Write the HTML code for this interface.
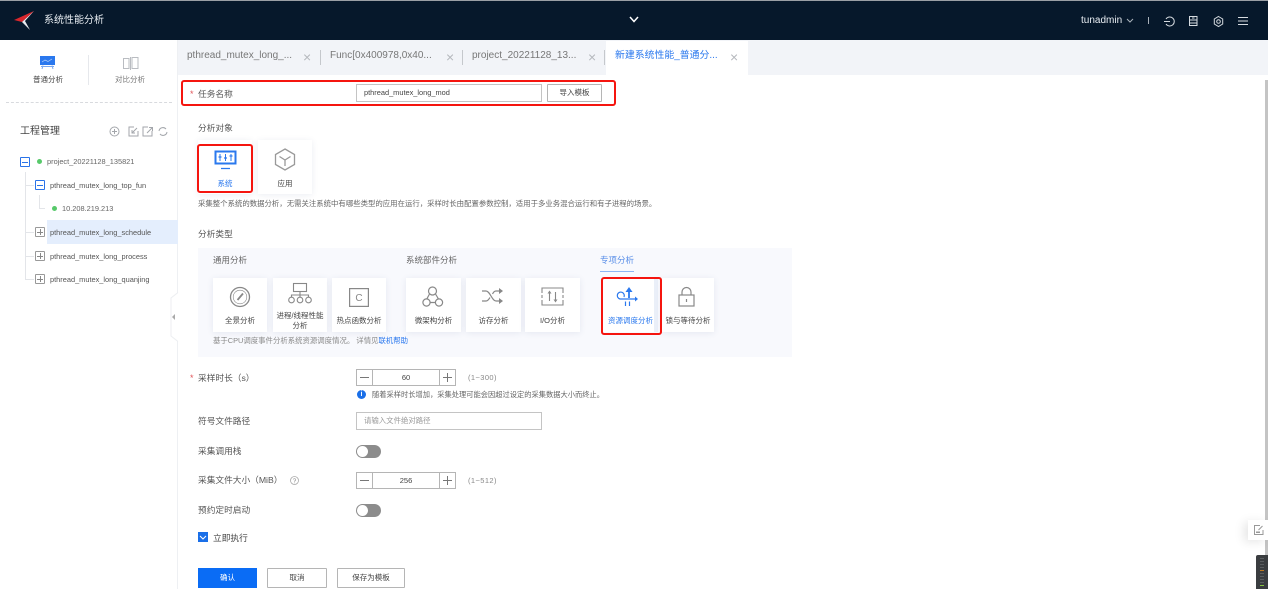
<!DOCTYPE html>
<html lang="zh">
<head>
<meta charset="utf-8">
<style>
html,body{margin:0;padding:0;width:1268px;height:589px;overflow:hidden;background:#fff}
body{position:relative;font-family:"Liberation Sans","Noto Sans CJK SC",sans-serif;color:#555;filter:blur(.3px)}
.a{position:absolute}
.t{position:absolute;white-space:nowrap;line-height:14px}
.f9{font-size:8.7px}.f8{font-size:7.5px}.f7{font-size:7.4px}
.card{position:absolute;background:#fff;box-shadow:0 1px 6px rgba(60,80,130,.10);width:54px;height:54px}
.cl{position:absolute;left:0;right:0;top:37px;text-align:center;font-size:7.5px;line-height:11px;color:#444}
svg{position:absolute;overflow:visible}
.red{position:absolute;border:2px solid #f5150f;border-radius:3px;box-sizing:border-box}
.tree{position:absolute;width:10px;height:10px;box-sizing:border-box;border:1px solid #999;border-radius:1px;background:#fff}
.tree.b{border-color:#2a73e8}
.tree:before{content:"";position:absolute;left:1px;right:1px;top:3.5px;height:1px;background:#888}
.tree.b:before{background:#2a73e8}
.tree.p:after{content:"";position:absolute;top:1px;bottom:1px;left:3.5px;width:1px;background:#888}
.sep{position:absolute;width:1px;height:15px;background:#c5c8cc;top:50px}
.x{position:absolute;top:50px;font-size:14px;line-height:14px;color:#b5b8bd}
.num{position:absolute;height:17px;width:100px;box-sizing:border-box;border:1px solid #b5b5b5;background:#fff}
.sw{position:absolute;width:25px;height:13px;background:#8c8c8c;border-radius:7px}
.sw:before{content:"";position:absolute;left:1px;top:1px;width:11px;height:11px;border-radius:50%;background:#fff}
.btn{position:absolute;box-sizing:border-box;border:1px solid #b5b5b5;background:#fff;text-align:center;font-size:7.5px;color:#444;border-radius:1px}
</style>
</head>
<body>
<!-- header -->
<div class="a" style="left:0;top:0;width:1268px;height:40px;background:#06182b"></div>
<div class="a" style="left:0;top:0;width:1268px;height:1px;background:#9a9fa5"></div>
<svg style="left:14px;top:10px" width="22" height="22" viewBox="0 0 22 22"><path d="M20 1 L0 10 L8 12 Z" fill="#d8262c"/><path d="M20 1 L8 12 L16 20 L11 11 Z" fill="#e8eaee"/></svg>
<div class="t" style="left:44px;top:14px;font-size:10px;color:#e8edf2">系统性能分析</div>
<svg style="left:629px;top:16px" width="10" height="8"><path d="M1 1 L5 5.500 L9 1" fill="none" stroke="#fff" stroke-width="1.500"/></svg>
<div class="t" style="left:1081px;top:14px;font-size:10px;color:#e8edf2">tunadmin</div>
<svg style="left:1126px;top:18px" width="8" height="6"><path d="M1 1 L4 4 L7 1" fill="none" stroke="#aab2bb"/></svg>
<div class="a" style="left:1148px;top:17px;width:1px;height:7px;background:#aab2bb"></div>
<svg style="left:1164px;top:16px" width="11" height="11" fill="none" stroke="#d6dbe0"><path d="M2 3 A4.500 4.500 0 1 1 2 8 M0 5.500 H6"/></svg>
<svg style="left:1189px;top:16px" width="9" height="10" fill="none" stroke="#d6dbe0"><path d="M.5.500 H8 V9.500 H.5 Z M.5 4 H8 M.5 7 H8 M3 2 H5.500"/></svg>
<svg style="left:1213px;top:16px" width="11" height="11" fill="none" stroke="#d6dbe0"><path d="M5.500.500 L9.700 3 V8 L5.500 10.500 L1.300 8 V3 Z"/><circle cx="5.500" cy="5.500" r="1.800"/></svg>
<svg style="left:1238px;top:16px" width="10" height="10" stroke="#d6dbe0"><path d="M0 1.500 H10 M0 5 H10 M0 8.500 H10"/></svg>

<!-- tab bar -->
<div class="a" style="left:178px;top:40px;width:1090px;height:35px;background:#f2f4f8"></div>
<div class="a" style="left:606px;top:41px;width:142px;height:34px;background:#fff"></div>
<div class="t" style="left:187px;top:49px;font-size:10px;color:#777">pthread_mutex_long_...</div>
<div class="x" style="left:303px">×</div><div class="sep" style="left:320px"></div>
<div class="t" style="left:330px;top:49px;font-size:10px;color:#777">Func[0x400978,0x40...</div>
<div class="x" style="left:446px">×</div><div class="sep" style="left:462px"></div>
<div class="t" style="left:472px;top:49px;font-size:10px;color:#777">project_20221128_13...</div>
<div class="x" style="left:588px">×</div><div class="sep" style="left:604px"></div>
<div class="t" style="left:615px;top:49px;font-size:9.9px;color:#2a78ee">新建系统性能_普通分...</div>
<div class="x" style="left:730px">×</div>

<!-- sidebar -->
<div class="a" style="left:177px;top:40px;width:1px;height:549px;background:#eef0f3"></div>
<svg style="left:40px;top:56px" width="15" height="14"><rect width="15" height="9" fill="#2a78ee"/><path d="M2 6 L5 4 L8 5.500 L12 3" stroke="#bcd4fa" fill="none" stroke-width=".7"/><path d="M3 9.500 L2 13 M12 9.500 L13 13 M1 10.500 H14" stroke="#7aa8f0" fill="none"/></svg>
<div class="t f8" style="left:33px;top:73px;color:#444">普通分析</div>
<div class="a" style="left:88px;top:55px;width:1px;height:30px;background:#e6e8ec"></div>
<svg style="left:123px;top:57px" width="16" height="13" fill="none" stroke="#b9bcc1"><path d="M.5 1.500 H6 V11.500 H.5 Z M9 .500 H15 V11.500 H9 Z M7.500 0 V13"/></svg>
<div class="t f8" style="left:115px;top:73px;color:#777">对比分析</div>
<div class="a" style="left:6px;top:102px;width:166px;height:0;border-top:1px dashed #d8dade"></div>
<div class="t" style="left:20px;top:125px;font-size:10px;color:#444">工程管理</div>
<svg style="left:109px;top:126px" width="60" height="11" fill="none" stroke="#a3a6ab"><circle cx="5.500" cy="5.500" r="4.500"/><path d="M5.500 3 V8 M3 5.500 H8"/><path d="M25 1 H20 V10 H29 V5 M28 2 L23 7 M23 4 V7 H26"/><path d="M38 1 H33 V10 H42 V5 M37 7 L42 2 M39 1.500 H42.500 V5" transform="translate(1 0)"/><path d="M50 5 A4 4 0 0 1 57 3 M58 6 A4 4 0 0 1 51 8"/></svg>

<!-- tree -->
<div class="a" style="left:25px;top:172px;width:1px;height:108px;background:#e3e5e9"></div>
<div class="a" style="left:25px;top:185px;width:9px;height:1px;background:#e3e5e9"></div>
<div class="a" style="left:25px;top:232px;width:9px;height:1px;background:#e3e5e9"></div>
<div class="a" style="left:25px;top:256px;width:9px;height:1px;background:#e3e5e9"></div>
<div class="a" style="left:25px;top:279px;width:9px;height:1px;background:#e3e5e9"></div>
<div class="a" style="left:39px;top:195px;width:1px;height:13px;background:#e3e5e9"></div>
<div class="a" style="left:39px;top:208px;width:6px;height:1px;background:#e3e5e9"></div>
<div class="tree b" style="left:20px;top:157px"></div>
<div class="a" style="left:37px;top:159px;width:5px;height:5px;border-radius:50%;background:#57c96a"></div>
<div class="t f7" style="left:47px;top:155px;color:#666">project_20221128_135821</div>
<div class="tree b" style="left:35px;top:180px"></div>
<div class="t f7" style="left:50px;top:179px;color:#555">pthread_mutex_long_top_fun</div>
<div class="a" style="left:52px;top:206px;width:5px;height:5px;border-radius:50%;background:#57c96a"></div>
<div class="t f7" style="left:62px;top:202px;color:#666">10.208.219.213</div>
<div class="a" style="left:47px;top:220px;width:131px;height:24px;background:#e4eefd"></div>
<div class="tree p" style="left:35px;top:227px"></div>
<div class="t f7" style="left:50px;top:226px;color:#555">pthread_mutex_long_schedule</div>
<div class="tree p" style="left:35px;top:251px"></div>
<div class="t f7" style="left:50px;top:250px;color:#555">pthread_mutex_long_process</div>
<div class="tree p" style="left:35px;top:274px"></div>
<div class="t f7" style="left:50px;top:273px;color:#555">pthread_mutex_long_quanjing</div>
<svg style="left:169px;top:292px" width="9" height="50"><path d="M9 .500 L2 6 V44 L9 49.500" fill="#fff" stroke="#eceef1"/><path d="M6 22 L3 25 L6 28 Z" fill="#aaa"/></svg>

<!-- task name -->
<div class="red" style="left:181px;top:80px;width:435px;height:26px"></div>
<div class="t" style="left:190px;top:87px;font-size:9px;color:#e0555a">*</div>
<div class="t f9" style="left:198px;top:87px;color:#555">任务名称</div>
<div class="a" style="left:356px;top:84px;width:186px;height:18px;box-sizing:border-box;border:1px solid #c4c4c4"></div>
<div class="t f7" style="left:364px;top:86px;color:#444">pthread_mutex_long_mod</div>
<div class="btn" style="left:547px;top:84px;width:55px;height:18px;line-height:16px">导入模板</div>

<!-- target -->
<div class="t f9" style="left:198px;top:121px;color:#555">分析对象</div>
<div class="card" style="left:198px;top:140px"><div class="cl" style="top:38px;color:#2a78ee">系统</div></div>
<svg style="left:214px;top:150px" width="24" height="22"><rect x="1.500" y="1.500" width="20" height="12" fill="#fff" stroke="#2a78ee" stroke-width="2"/><path d="M6 4 V11 M11.500 4 V11 M17 4 V11" stroke="#2a78ee"/><path d="M4.500 7 H7.500 M10 8 H13 M15.500 6 H18.500 M7 18.500 H16" stroke="#2a78ee" stroke-width="1.200"/></svg>
<div class="red" style="left:197px;top:144px;width:56px;height:49px"></div>
<div class="card" style="left:258px;top:140px"><div class="cl" style="top:38px">应用</div></div>
<svg style="left:274px;top:148px" width="22" height="23" fill="none" stroke="#999" stroke-width="1.300"><path d="M11 1 L20.500 6.500 V16.500 L11 22 L1.500 16.500 V6.500 Z M5.500 8.500 L11 12 L16.500 8.500 M11 12 V18"/></svg>
<div class="t f7" style="left:198px;top:197px;color:#666">采集整个系统的数据分析，无需关注系统中有哪些类型的应用在运行，采样时长由配置参数控制，适用于多业务混合运行和有子进程的场景。</div>

<!-- type -->
<div class="t f9" style="left:198px;top:227px;color:#555">分析类型</div>
<div class="a" style="left:198px;top:248px;width:594px;height:109px;background:#f8f9fd"></div>
<div class="t" style="left:213px;top:253px;font-size:8.5px;color:#666">通用分析</div>
<div class="t" style="left:406px;top:253px;font-size:8.5px;color:#666">系统部件分析</div>
<div class="t" style="left:600px;top:253px;font-size:8.5px;color:#5a8fe8">专项分析</div>
<div class="a" style="left:600px;top:271px;width:34px;height:1px;background:#8db6f5"></div>

<div class="card" style="left:213px;top:278px"><div class="cl">全景分析</div></div>
<svg style="left:229px;top:286px" width="22" height="22" fill="none" stroke="#888" stroke-width="1.300"><circle cx="11" cy="11" r="9.500"/><circle cx="11" cy="11" r="6.800" stroke-width=".6"/><path d="M8.500 14 L14 7.500" stroke-width="1.800"/></svg>
<div class="card" style="left:273px;top:278px"><div class="cl" style="top:33px;line-height:10px">进程/线程性能<br>分析</div></div>
<svg style="left:288px;top:283px" width="24" height="20" fill="none" stroke="#888" stroke-width="1.100"><rect x="5.500" y=".500" width="13" height="8"/><path d="M12 8.500 V12 M3.500 14.500 V12 H20.500 V14.500 M12 12 V14.500"/><circle cx="3.500" cy="17" r="2.800"/><circle cx="12" cy="17" r="2.800"/><circle cx="20.500" cy="17" r="2.800"/></svg>
<div class="card" style="left:332px;top:278px"><div class="cl">热点函数分析</div></div>
<svg style="left:349px;top:288px" width="20" height="18"><rect x=".600" y=".600" width="18.800" height="17.800" fill="none" stroke="#888" stroke-width="1.200"/><text x="10" y="13" font-size="10" text-anchor="middle" fill="#888" font-family="Liberation Sans">C</text></svg>
<div class="card" style="left:406px;top:278px;width:55px"><div class="cl">微架构分析</div></div>
<svg style="left:422px;top:286px" width="22" height="22" fill="none" stroke="#888" stroke-width="1.200"><circle cx="10.500" cy="5" r="4"/><circle cx="4.500" cy="16.500" r="3.600"/><circle cx="17" cy="16.500" r="3.600"/><path d="M7.500 8 L4.800 13 M13.500 8 L16.500 13 M8 16.500 H13.500"/></svg>
<div class="card" style="left:466px;top:278px;width:55px"><div class="cl">访存分析</div></div>
<svg style="left:482px;top:288px" width="22" height="18" fill="none" stroke="#888" stroke-width="1.200"><path d="M0 3 H4 C8 3 10 13 14 13 H18 M0 13 H4 C6 13 7 11 8 9.500 M10.500 6 C11.500 4 13 3 14 3 H18"/><path d="M17 0 L21 3 L17 6 Z M17 10 L21 13 L17 16 Z" fill="#888" stroke="none"/></svg>
<div class="card" style="left:525px;top:278px;width:55px"><div class="cl">I/O分析</div></div>
<svg style="left:541px;top:287px" width="23" height="19" fill="none" stroke="#888" stroke-width="1.100"><path d="M1 6 V1 H22 V6 M1 13 V18 H22 V13 M1 8 V11 M22 8 V11"/><path d="M8.500 14 V5 M14.500 5 V14"/><path d="M8.500 3.500 L6.500 6.500 H10.500 Z M14.500 15.500 L12.500 12.500 H16.500 Z" fill="#888" stroke="none"/></svg>
<div class="card" style="left:603px;top:278px;width:55px;box-shadow:inset -4px 0 0 #eaeff8"><div class="cl" style="color:#2a78ee">资源调度分析</div></div>
<svg style="left:616px;top:287px" width="22" height="20" fill="none" stroke="#2a78ee" stroke-width="1.200"><path d="M8 10 A3.500 3.500 0 1 0 4 12 H20"/><path d="M13 11 V3" stroke-width="1.800"/><path d="M13 0 L9.500 5 H16.500 Z" fill="#2a78ee" stroke="none"/><path d="M19 9.500 L22 12 L19 14.500 Z" fill="#2a78ee" stroke="none"/><path d="M9.500 14.500 V19 M13.500 14.500 V19"/></svg>
<div class="card" style="left:662px;top:278px;width:52px"><div class="cl">锁与等待分析</div></div>
<svg style="left:678px;top:287px" width="17" height="20" fill="none" stroke="#888" stroke-width="1.200"><rect x="1" y="8" width="15" height="11"/><path d="M4 8 V5 A4.500 4.500 0 0 1 13 5 V8 M8.500 12 V15"/></svg>
<div class="red" style="left:601px;top:277px;width:61px;height:58px"></div>
<div class="t f7" style="left:213px;top:334px;color:#888">基于CPU调度事件分析系统资源调度情况。 详情见<span style="color:#2a78ee">联机帮助</span></div>

<!-- form -->
<div class="t" style="left:190px;top:371px;font-size:9px;color:#e0555a">*</div>
<div class="t f9" style="left:198px;top:371px;color:#555">采样时长（s）</div>
<div class="num" style="left:356px;top:369px"></div>
<div class="a" style="left:372px;top:369px;width:1px;height:17px;background:#b5b5b5"></div>
<div class="a" style="left:439px;top:369px;width:1px;height:17px;background:#b5b5b5"></div>
<div class="a" style="left:360px;top:377px;width:9px;height:1px;background:#777"></div>
<div class="a" style="left:443px;top:377px;width:9px;height:1px;background:#777"></div>
<div class="a" style="left:447px;top:373px;width:1px;height:9px;background:#777"></div>
<div class="t f8" style="left:373px;top:371px;width:66px;text-align:center;color:#444">60</div>
<div class="t f8" style="left:468px;top:371px;color:#888;letter-spacing:.4px">(1~300)</div>
<div class="a" style="left:357px;top:390px;width:9px;height:9px;border-radius:50%;background:#1a6fe8;color:#fff;font-size:7px;line-height:9px;text-align:center;font-weight:bold">i</div>
<div class="t" style="left:372px;top:388px;font-size:7.25px;color:#666">随着采样时长增加，采集处理可能会因超过设定的采集数据大小而终止。</div>
<div class="t f9" style="left:198px;top:414px;color:#555">符号文件路径</div>
<div class="a" style="left:356px;top:412px;width:186px;height:18px;box-sizing:border-box;border:1px solid #c4c4c4"></div>
<div class="t f7" style="left:364px;top:414px;color:#999">请输入文件绝对路径</div>
<div class="t f9" style="left:198px;top:444px;color:#555">采集调用栈</div>
<div class="sw" style="left:356px;top:445px"></div>
<div class="t f9" style="left:198px;top:473px;color:#555">采集文件大小（MiB）</div>
<svg style="left:290px;top:476px" width="9" height="9" fill="none" stroke="#aaa" stroke-width=".8"><circle cx="4.500" cy="4.500" r="4"/><path d="M3.300 3.500 A1.200 1.200 0 1 1 4.500 5 V5.800 M4.500 6.500 V7.300"/></svg>
<div class="num" style="left:356px;top:472px"></div>
<div class="a" style="left:372px;top:472px;width:1px;height:17px;background:#b5b5b5"></div>
<div class="a" style="left:439px;top:472px;width:1px;height:17px;background:#b5b5b5"></div>
<div class="a" style="left:360px;top:480px;width:9px;height:1px;background:#777"></div>
<div class="a" style="left:443px;top:480px;width:9px;height:1px;background:#777"></div>
<div class="a" style="left:447px;top:476px;width:1px;height:9px;background:#777"></div>
<div class="t f8" style="left:373px;top:474px;width:66px;text-align:center;color:#444">256</div>
<div class="t f8" style="left:468px;top:474px;color:#888;letter-spacing:.4px">(1~512)</div>
<div class="t f9" style="left:198px;top:503px;color:#555">预约定时启动</div>
<div class="sw" style="left:356px;top:504px"></div>
<div class="a" style="left:198px;top:532px;width:10px;height:10px;background:#1a6fe8"></div>
<svg style="left:198px;top:532px" width="10" height="10"><path d="M2 4 L5 7 L8 4" fill="none" stroke="#fff"/></svg>
<div class="t f9" style="left:213px;top:531px;color:#444">立即执行</div>
<div class="a" style="left:198px;top:568px;width:59px;height:20px;background:#0a6cf5;color:#fff;font-size:7.5px;line-height:20px;text-align:center">确认</div>
<div class="btn" style="left:267px;top:568px;width:60px;height:20px;line-height:18px">取消</div>
<div class="btn" style="left:337px;top:568px;width:68px;height:20px;line-height:18px">保存为模板</div>

<!-- right -->
<div class="a" style="left:1265px;top:80px;width:3px;height:475px;background:#c4c4c4"></div>
<div class="a" style="left:1248px;top:520px;width:20px;height:20px;background:#fff;box-shadow:-4px 2px 10px rgba(0,0,0,.10)"></div>
<svg style="left:1254px;top:525px" width="10" height="10" fill="none" stroke="#999"><path d="M6 .500 H.500 V9.500 H9 V5 M8.500 1 L4.500 5"/><path d="M2 6.500 H6 V8 H2 Z" fill="#999" stroke="none"/></svg>
<div class="a" style="left:1256px;top:555px;width:12px;height:34px;background:#3a3d40;border-radius:2px 0 0 0"></div>
<div class="a" style="left:1260px;top:558px;width:4px;height:29px;background:repeating-linear-gradient(#5a5d60 0 1px,transparent 1px 3px)"></div>
<div class="a" style="left:1260px;top:570px;width:4px;height:1px;background:#c07a20"></div>
<div class="a" style="left:1260px;top:585px;width:4px;height:1px;background:#86c440"></div>
</body>
</html>
